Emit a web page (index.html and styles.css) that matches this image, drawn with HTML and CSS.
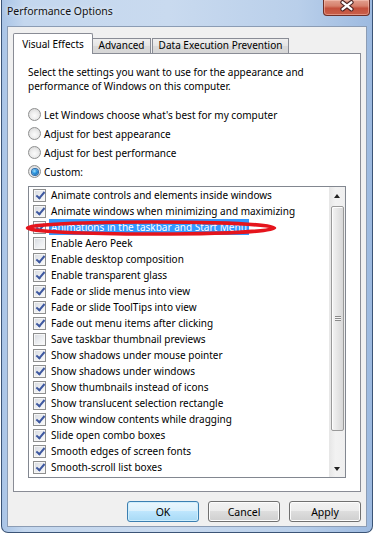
FILE: index.html
```html
<!DOCTYPE html>
<html>
<head>
<meta charset="utf-8">
<title>Performance Options</title>
<link rel="stylesheet" href="styles.css">
</head>
<body>
<div class="window">
  <div class="titlebar">
    <span class="title">Performance Options</span>
    <div class="close">
      <svg width="47" height="16" viewBox="0 0 47 16">
        <path d="M20 2.2 L29 9.2 M29 2.2 L20 9.2" stroke="#4a2323" stroke-width="4.6" stroke-linecap="round" fill="none"/>
        <path d="M20 2.2 L29 9.2 M29 2.2 L20 9.2" stroke="#ffffff" stroke-width="2.4" stroke-linecap="round" fill="none"/>
      </svg>
    </div>
  </div>
  <div class="client">
    <div class="tabs">
      <div class="tab active">Visual Effects</div>
      <div class="tab adv">Advanced</div>
      <div class="tab dep">Data Execution Prevention</div>
    </div>
    <div class="panel">
      <p class="desc">Select the settings you want to use for the appearance and<br>performance of Windows on this computer.</p>
      <div class="radios">
        <div class="radio-row"><span class="radio"></span><span>Let Windows choose what's best for my computer</span></div>
        <div class="radio-row"><span class="radio"></span><span>Adjust for best appearance</span></div>
        <div class="radio-row"><span class="radio"></span><span>Adjust for best performance</span></div>
        <div class="radio-row"><span class="radio on"></span><span>Custom:</span></div>
      </div>
      <div class="listbox">
        <ul class="items">
          <li><span class="cb on"></span><span class="lbl">Animate controls and elements inside windows</span></li>
          <li><span class="cb on"></span><span class="lbl">Animate windows when minimizing and maximizing</span></li>
          <li><span class="cb on"></span><span class="lbl sel">Animations in the taskbar and Start Menu</span></li>
          <li><span class="cb"></span><span class="lbl">Enable Aero Peek</span></li>
          <li><span class="cb on"></span><span class="lbl">Enable desktop composition</span></li>
          <li><span class="cb on"></span><span class="lbl">Enable transparent glass</span></li>
          <li><span class="cb on"></span><span class="lbl">Fade or slide menus into view</span></li>
          <li><span class="cb on"></span><span class="lbl">Fade or slide ToolTips into view</span></li>
          <li><span class="cb on"></span><span class="lbl">Fade out menu items after clicking</span></li>
          <li><span class="cb"></span><span class="lbl">Save taskbar thumbnail previews</span></li>
          <li><span class="cb on"></span><span class="lbl">Show shadows under mouse pointer</span></li>
          <li><span class="cb on"></span><span class="lbl">Show shadows under windows</span></li>
          <li><span class="cb on"></span><span class="lbl">Show thumbnails instead of icons</span></li>
          <li><span class="cb on"></span><span class="lbl">Show translucent selection rectangle</span></li>
          <li><span class="cb on"></span><span class="lbl">Show window contents while dragging</span></li>
          <li><span class="cb on"></span><span class="lbl">Slide open combo boxes</span></li>
          <li><span class="cb on"></span><span class="lbl">Smooth edges of screen fonts</span></li>
          <li><span class="cb on"></span><span class="lbl">Smooth-scroll list boxes</span></li>
        </ul>
        <div class="scrollbar">
          <div class="sb-btn"><span class="arrow up"></span></div>
          <div class="track">
            <div class="thumb"><span class="grip"></span></div>
          </div>
          <div class="sb-btn"><span class="arrow down"></span></div>
        </div>
        <svg class="ellipse" width="252" height="16" viewBox="0 0 252 16">
          <ellipse cx="126" cy="8" rx="123.5" ry="6" fill="none" stroke="#e5141c" stroke-width="3.6"/>
        </svg>
      </div>
    </div>
    <div class="buttons">
      <button class="btn default">OK</button>
      <button class="btn">Cancel</button>
      <button class="btn">Apply</button>
    </div>
  </div>
</div>
</body>
</html>
```

FILE: styles.css
```css
* { box-sizing: border-box; margin: 0; padding: 0; }
html, body { width: 374px; height: 538px; overflow: hidden; }
body {
  background: #ffffff;
  font-family: "Noto Sans", "Open Sans", sans-serif;
  font-size: 10px;
  color: #000;
}

.window {
  margin-left: 1px;
  width: 372px;
  height: 533px;
  border: 1px solid #3b5476;
  border-top: none;
  border-radius: 0 0 7px 7px;
  background: linear-gradient(to right, #a9c4e6 0, #c4d7ee 6%, #c9daef 45%, #b9cfea 80%, #9dbae0 100%);
  padding: 0 5px 5px;
  display: flex;
  flex-direction: column;
}

.titlebar {
  height: 26px;
  display: flex;
  align-items: flex-start;
}
.title {
  margin-top: 5px;
  font-size: 10.5px;
  line-height: 12px;
  color: #111;
  text-shadow: 0 0 4px rgba(255,255,255,0.9);
}
.close {
  margin-left: auto;
  margin-right: -3px;
  width: 47px;
  height: 16px;
  border: 1px solid #6e2f27;
  border-top: none;
  border-radius: 0 0 4px 4px;
  background: linear-gradient(#e2a08f 0%, #d6806c 40%, #c4503c 55%, #c9604a 100%);
  box-shadow: inset 0 0 0 1px rgba(255,210,200,0.45);
  display: flex;
}
.close svg { display: block; margin-left: -1px; }

.client {
  flex: 1;
  border: 1px solid #8b9cb4;
  background: #f0f0f0;
  padding: 6px 5px 4px;
  display: flex;
  flex-direction: column;
}

.tabs {
  height: 21px;
  display: flex;
  align-items: flex-end;
  margin-bottom: -1px;
  position: relative;
  z-index: 1;
}
.tab {
  height: 15px;
  border: 1px solid #898c95;
  border-bottom: none;
  background: linear-gradient(#efefef, #e4e4e4 50%, #dadada 50%, #d6d6d6);
  line-height: 13px;
  text-align: center;
  white-space: nowrap;
}
.tab.active {
  height: 21px;
  width: 80px;
  background: #ffffff;
  border-radius: 2px 2px 0 0;
  padding-top: 4px;
}
.tab.adv { width: 58px; border-left: none; margin-bottom: 1px; }
.tab.dep { width: 137px; margin-left: 1px; margin-bottom: 1px; }

.panel {
  height: 439px;
  border: 1px solid #898c95;
  background: #ffffff;
}

.desc {
  margin: 11px 0 0 14px;
  line-height: 14px;
}

.radios { margin-top: 12px; }
.radio-row {
  height: 19px;
  display: flex;
  align-items: center;
  padding-left: 14px;
}
.radio {
  width: 13px;
  height: 13px;
  border: 1px solid #8e8f8f;
  border-radius: 50%;
  background: radial-gradient(circle at 50% 60%, #fbfbfb 0, #ececec 45%, #cfcfcf 100%);
  margin-right: 3px;
  display: flex;
  align-items: center;
  justify-content: center;
  flex: none;
}
.radio.on::after {
  content: "";
  width: 6px;
  height: 6px;
  border-radius: 50%;
  background: radial-gradient(circle at 40% 35%, #9ee0ff 0, #2a94de 45%, #0b5296 100%);
  box-shadow: 0 0 0 1px #2b6aa8;
}

.listbox {
  position: relative;
  margin: 5px 0 0 14px;
  width: 318px;
  height: 292px;
  border: 1px solid #828790;
  display: flex;
}
.items {
  flex: 1;
  list-style: none;
}
.items li {
  height: 16px;
  display: flex;
  align-items: center;
  padding-left: 4px;
  white-space: nowrap;
}
.cb {
  width: 13px;
  height: 13px;
  border: 1px solid #8e8f8f;
  background: linear-gradient(135deg, #d6d9de 0, #eceef1 55%, #fafafa 100%);
  box-shadow: inset 0 0 0 1px #f6f6f6;
  position: relative;
  flex: none;
}
.cb.on::after {
  content: "";
  position: absolute;
  left: 3.5px;
  top: 0.5px;
  width: 3px;
  height: 7px;
  border-right: 2px solid #3e58a0;
  border-bottom: 2px solid #3e58a0;
  transform: rotate(40deg);
}
.lbl {
  margin-left: 3px;
  padding: 0 2px;
  line-height: 16px;
}
.lbl.sel {
  background: #3399ff;
  color: #ffffff;
}

.scrollbar {
  width: 16px;
  display: flex;
  flex-direction: column;
  background: linear-gradient(to right, #e6e6e6, #f2f2f2 40%, #efefef);
}
.sb-btn {
  height: 17px;
  display: flex;
  align-items: center;
  justify-content: center;
}
.arrow { width: 0; height: 0; border-left: 3.5px solid transparent; border-right: 3.5px solid transparent; }
.arrow.up { border-bottom: 4px solid #222; }
.arrow.down { border-top: 4px solid #222; }
.track { flex: 1; padding: 2px 1px 0 2px; }
.thumb {
  height: 225px;
  border: 1px solid #9a9a9a;
  border-radius: 2px;
  background: linear-gradient(to right, #f4f4f4, #e6e6e6 50%, #d8d8d8);
  box-shadow: inset 1px 1px 0 #fdfdfd;
  display: flex;
  align-items: center;
  justify-content: center;
}
.grip {
  width: 6px;
  height: 5px;
  border-top: 1px solid #8a8a8a;
  border-bottom: 1px solid #8a8a8a;
  background: linear-gradient(#f4f4f4 0, #f4f4f4 1px, #8a8a8a 1px, #8a8a8a 2px, #f4f4f4 2px);
}

.ellipse {
  position: absolute;
  left: -4px;
  top: 33px;
}

.buttons {
  margin-top: 9px;
  display: flex;
  justify-content: flex-end;
  gap: 9px;
}
.btn {
  width: 72px;
  height: 21px;
  border: 1px solid #707070;
  border-radius: 3px;
  background: linear-gradient(#f2f2f2 0, #ebebeb 50%, #dddddd 50%, #cfcfcf 100%);
  box-shadow: inset 0 0 0 1px #fcfcfc;
  font-family: "Noto Sans", "Open Sans", sans-serif;
  font-size: 10.5px;
  color: #000;
}
.btn.default {
  border-color: #3c7fb1;
  background: linear-gradient(#eaf6fd 0, #d9f0fc 50%, #bee6fd 50%, #a7d9f5 100%);
  box-shadow: inset 0 0 0 1px #cfeefc;
}
```
